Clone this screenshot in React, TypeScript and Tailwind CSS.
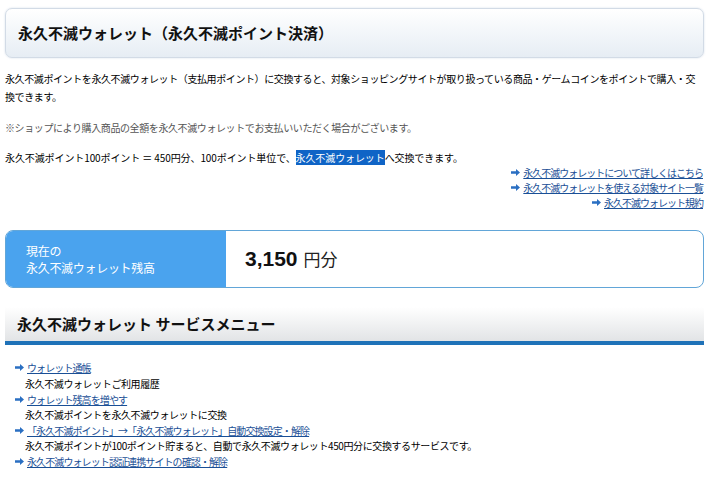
import React from "react";

const Arrow = () => (
  <svg width="9" height="7" viewBox="0 0 9 7" className="inline-block shrink-0">
    <path d="M0 2.2h5V0l4 3.5-4 3.5V4.8H0z" fill="#2a6fc2" />
  </svg>
);

const LinkLine = ({ children }: { children: React.ReactNode }) => (
  <div className="flex items-center justify-end gap-[3px] h-[15px]">
    <Arrow />
    <a className="text-[#1a4f96] underline underline-offset-1 tracking-[-1px]">{children}</a>
  </div>
);

const MenuLink = ({ children }: { children: React.ReactNode }) => (
  <div className="flex items-center gap-[3px] h-[15.7px] pl-[10px]">
    <Arrow />
    <a className="text-[#1a4f96] underline underline-offset-1 tracking-[-0.9px]">{children}</a>
  </div>
);

const MenuDesc = ({ children }: { children: React.ReactNode }) => (
  <div className="h-[15.7px] leading-[15.7px] pl-[20px] text-black">{children}</div>
);

export default function App() {
  return (
    <div
      className="w-[709px] h-[488px] bg-white overflow-hidden px-[5px] text-[10px] tracking-[-0.4px] text-black"
      style={{ fontFamily: '"Noto Sans CJK JP", "Noto Sans", sans-serif' }}
    >
      <div className="mt-[8px] h-[50px] rounded-[7px] border border-[#d2dbe6] bg-gradient-to-b from-white to-[#e6edf4] flex items-center pl-[12px] shadow-[0_0_2px_rgba(180,195,215,0.6)]">
        <h1 className="text-[15px] font-bold tracking-[0px] text-[#111]">
          永久不滅ウォレット（永久不滅ポイント決済）
        </h1>
      </div>

      <p className="mt-[12px] leading-[18px] whitespace-nowrap">
        永久不滅ポイントを永久不滅ウォレット（支払用ポイント）に交換すると、対象ショッピングサイトが取り扱っている商品・ゲームコインをポイントで購入・交
        <br />
        換できます。
      </p>

      <p className="mt-[13px] leading-[18px] text-[#555]">
        ※ショップにより購入商品の全額を永久不滅ウォレットでお支払いいただく場合がございます。
      </p>

      <p className="mt-[12px] leading-[18px] tracking-[-0.1px]">
        永久不滅ポイント100ポイント ＝ 450円分、100ポイント単位で、
        <span className="bg-[#0f64c6] text-white">永久不滅ウォレット</span>
        へ交換できます。
      </p>

      <div className="mt-[-2px] pr-[1px]">
        <LinkLine>永久不滅ウォレットについて詳しくはこちら</LinkLine>
        <LinkLine>永久不滅ウォレットを使える対象サイト一覧</LinkLine>
        <LinkLine>永久不滅ウォレット規約</LinkLine>
      </div>

      <div className="mt-[20px] h-[58px] flex rounded-[8px] border border-[#62a6d8] overflow-hidden">
        <div className="w-[220px] bg-[#4aa3ee] text-white text-[12px] tracking-[-0.3px] leading-[17px] flex flex-col justify-center pl-[20px]">
          <div>現在の</div>
          <div>永久不滅ウォレット残高</div>
        </div>
        <div className="flex-1 flex items-center pl-[19px] tracking-[0px]">
          <span
            className="text-[21px] font-bold text-[#111]"
            style={{ fontFamily: '"Liberation Sans", Arial, sans-serif' }}
          >
            3,150
          </span>
          <span className="text-[17px] ml-[6px] text-[#222]">円分</span>
        </div>
      </div>

      <div className="mt-[19px]">
        <div className="h-[34px] bg-gradient-to-b from-white to-[#e2e4e6] flex items-center pl-[12px]">
          <h2 className="text-[15px] font-bold tracking-[0px] text-[#111]">
            永久不滅ウォレット サービスメニュー
          </h2>
        </div>
        <div className="h-[4px] bg-[#1f72b8]" />
      </div>

      <div className="mt-[15px] text-[10px]">
        <MenuLink>ウォレット通帳</MenuLink>
        <MenuDesc>永久不滅ウォレットご利用履歴</MenuDesc>
        <MenuLink>ウォレット残高を増やす</MenuLink>
        <MenuDesc>永久不滅ポイントを永久不滅ウォレットに交換</MenuDesc>
        <MenuLink>「永久不滅ポイント」→「永久不滅ウォレット」自動交換設定・解除</MenuLink>
        <MenuDesc>永久不滅ポイントが100ポイント貯まると、自動で永久不滅ウォレット450円分に交換するサービスです。</MenuDesc>
        <MenuLink>永久不滅ウォレット認証連携サイトの確認・解除</MenuLink>
      </div>
    </div>
  );
}
